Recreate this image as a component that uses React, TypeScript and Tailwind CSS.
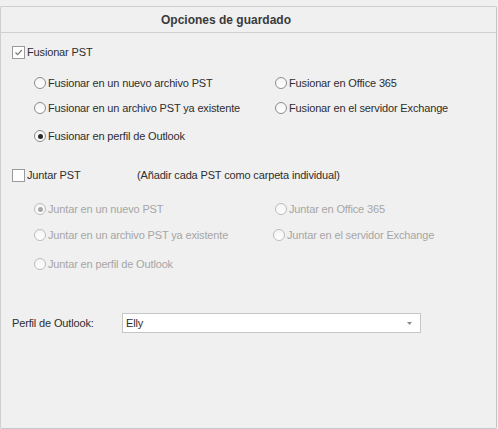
import React from "react";

function Radio({ checked, disabled }: { checked?: boolean; disabled?: boolean }) {
  return (
    <span
      className={
        "flex h-[12px] w-[12px] shrink-0 items-center justify-center rounded-full border bg-gradient-to-b from-[#f4f4f4] to-[#ffffff] " +
        (disabled ? "border-[#bcbcbc]" : "border-[#8c8c8c]")
      }
    >
      {checked && (
        <span className={"h-[5px] w-[5px] rounded-full " + (disabled ? "bg-[#a8a8a8]" : "bg-[#2a2a2a]")} />
      )}
    </span>
  );
}

function Check({ checked }: { checked?: boolean }) {
  return (
    <span className="flex h-[13px] w-[13px] shrink-0 items-center justify-center border border-[#9a9a9a] bg-white">
      {checked && (
        <svg width="9" height="9" viewBox="0 0 9 9">
          <path d="M1.5 4.5 L3.6 6.6 L7.8 2" fill="none" stroke="#7c7c7c" strokeWidth="1.2" />
        </svg>
      )}
    </span>
  );
}

function RadioItem({
  label,
  checked,
  disabled,
}: {
  label: string;
  checked?: boolean;
  disabled?: boolean;
}) {
  return (
    <div className="flex items-center gap-[2px]">
      <Radio checked={checked} disabled={disabled} />
      <span className={disabled ? "text-[#a6a6a6]" : "text-[#2e2e2e]"}>{label}</span>
    </div>
  );
}

export default function App() {
  return (
    <div
      className="h-[429px] w-[498px] bg-[#f0f0f0] pt-[6px] text-[11px] leading-none tracking-[-0.15px]"
      style={{ fontFamily: '"Liberation Sans", Arial, sans-serif' }}
    >
      <div className="flex h-[423px] w-[497px] flex-col rounded-[2px] border border-[#cfcfcf] border-r-[#c4c4c4] border-b-[#c8c8c8]">
        <div className="flex h-[26px] items-center border-b border-[#d0d0d0] pl-[160px] text-[12px] font-bold tracking-[0px] text-[#3a3a3a]">
          Opciones de guardado
        </div>

        <div className="mt-[9px] flex h-[20px] items-center gap-[2px] pl-[11px]">
          <Check checked />
          <span className="text-[#2e2e2e]">Fusionar PST</span>
        </div>

        <div className="mt-[11px] grid h-[20px] grid-cols-[241px_1fr] items-center pl-[33px]">
          <RadioItem label="Fusionar en un nuevo archivo PST" />
          <RadioItem label="Fusionar en Office 365" />
        </div>
        <div className="mt-[5px] grid h-[20px] grid-cols-[241px_1fr] items-center pl-[33px]">
          <RadioItem label="Fusionar en un archivo PST ya existente" />
          <RadioItem label="Fusionar en el servidor Exchange" />
        </div>
        <div className="mt-[8px] flex h-[20px] items-center pl-[33px]">
          <RadioItem label="Fusionar en perfil de Outlook" checked />
        </div>

        <div className="mt-[19px] flex h-[20px] items-center pl-[11px]">
          <Check />
          <span className="ml-[2px] w-[110px] text-[#2e2e2e]">Juntar PST</span>
          <span className="text-[#2e2e2e]">(Añadir cada PST como carpeta individual)</span>
        </div>

        <div className="mt-[14px] grid h-[20px] grid-cols-[241px_1fr] items-center pl-[33px]">
          <RadioItem label="Juntar en un nuevo PST" checked disabled />
          <RadioItem label="Juntar en Office 365" disabled />
        </div>
        <div className="mt-[6px] grid h-[20px] grid-cols-[239px_1fr] items-center pl-[33px]">
          <RadioItem label="Juntar en un archivo PST ya existente" disabled />
          <RadioItem label="Juntar en el servidor Exchange" disabled />
        </div>
        <div className="mt-[9px] flex h-[20px] items-center pl-[33px]">
          <RadioItem label="Juntar en perfil de Outlook" disabled />
        </div>

        <div className="mt-[39px] flex h-[20px] items-center pl-[11px]">
          <span className="w-[110px] text-[#2e2e2e]">Perfil de Outlook:</span>
          <div className="flex h-[20px] w-[299px] items-center justify-between border border-[#c6c6c6] bg-white pl-[3px] pr-[8px]">
            <span className="text-[#2e2e2e]">Elly</span>
            <svg width="5" height="3" viewBox="0 0 5 3">
              <path d="M0 0 L5 0 L2.5 3 Z" fill="#8a8a8a" />
            </svg>
          </div>
        </div>
      </div>
    </div>
  );
}
